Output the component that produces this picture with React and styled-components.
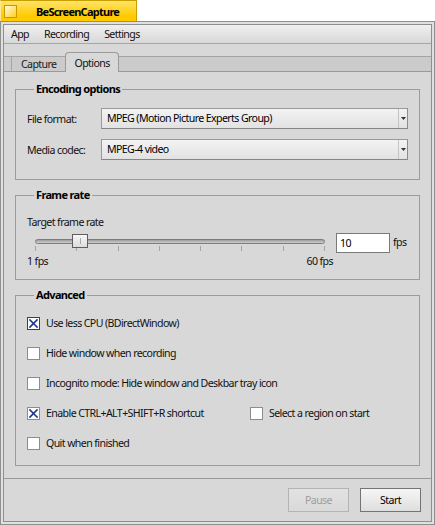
import React from "react";
import styled, { createGlobalStyle } from "styled-components";

const GlobalStyle = createGlobalStyle`
  html, body { margin: 0; padding: 0; background: #ffffff; }
  body {
    font-family: "Noto Sans", "DejaVu Sans", sans-serif;
    font-size: 10.6px;
    letter-spacing: -0.6px;
    color: #111;
  }
  * { box-sizing: border-box; }
`;

const Screen = styled.div`
  width: 435px;
  height: 525px;
  display: flex;
  flex-direction: column;
`;

const TitleTab = styled.div`
  width: 137px;
  height: 21px;
  display: flex;
  align-items: center;
  padding-left: 3px;
  border: 1px solid #caa000;
  border-bottom: none;
  border-left-color: #ffe89a;
  background: linear-gradient(#ffe36a, #ffcb00 75%);
`;

const CloseBox = styled.div`
  width: 13px;
  height: 13px;
  border: 1px solid #c39a00;
  background: linear-gradient(135deg, #fffbe2, #ffe070 60%, #ffd21a);
`;

const Title = styled.span`
  margin-left: 19px;
  font-weight: bold;
  font-size: 11px;
  letter-spacing: -0.75px;
  color: #000;
`;

const Window = styled.div`
  height: 504px;
  border: 1px solid #8e8e8e;
  background: #e0e0e0;
  padding: 2px;
  display: flex;
`;

const Inner = styled.div`
  flex: 1;
  border: 1px solid #8e8e8e;
  background: #d8d8d8;
  display: flex;
  flex-direction: column;
`;

const MenuBar = styled.div`
  height: 19px;
  display: flex;
  align-items: center;
  gap: 1px;
  border-bottom: 1px solid #a6a6a6;
  background: linear-gradient(#efefef, #d8d8d8);
`;

const MenuItem = styled.span`
  padding: 0 7px;
  line-height: 18px;
`;

const TopGap = styled.div`
  height: 8px;
`;

const TabStrip = styled.div`
  height: 20px;
  display: flex;
  align-items: flex-end;
`;

const StripPiece = styled.div`
  height: 16px;
  background: #cbcbcb;
  border-top: 1px solid #a4a4a4;
  border-bottom: 1px solid #999;
  ${(p) => (p.$grow ? "flex: 1;" : `width: ${p.$w}px;`)}
  ${(p) => (p.$divider ? "border-right: 1px solid #a4a4a4;" : "")}
`;

const InactiveTab = styled.div`
  height: 16px;
  padding: 0 9px;
  display: flex;
  align-items: center;
  background: #cbcbcb;
  border-top: 1px solid #a4a4a4;
  border-bottom: 1px solid #999;
  color: #1a1a1a;
`;

const ActiveTab = styled.div`
  height: 20px;
  padding: 0 8px;
  display: flex;
  align-items: center;
  background: #d8d8d8;
  border: 1px solid #999;
  border-bottom: none;
  border-radius: 4px 4px 0 0;
`;

const TabContent = styled.div`
  flex: 1;
  border-bottom: 1px solid #9a9a9a;
  padding: 10px 11px 0;
  display: flex;
  flex-direction: column;
  gap: 8px;
`;

const Group = styled.fieldset`
  margin: 0;
  min-width: 0;
  border: 1px solid #9c9c9c;
  padding: ${(p) => p.$pad};
`;

const Legend = styled.legend`
  margin-left: 7px;
  padding: 0 2px;
  font-weight: bold;
  font-size: 11px;
  letter-spacing: -0.65px;
  line-height: 14px;
  color: #000;
`;

const FieldGrid = styled.div`
  display: grid;
  grid-template-columns: 74px 1fr;
  grid-auto-rows: 21px;
  row-gap: 10px;
  align-items: center;
`;

const Dropdown = styled.div`
  height: 21px;
  display: flex;
  border: 1px solid #9a9a9a;
  border-bottom-color: #858585;
  border-right-color: #8c8c8c;
  background: linear-gradient(#f3f3f3, #e2e2e2);
`;

const DropValue = styled.div`
  flex: 1;
  padding-left: 5px;
  line-height: 19px;
  color: #000;
`;

const DropArrow = styled.div`
  width: 9px;
  border-left: 1px solid #c4c4c4;
  display: flex;
  align-items: center;
  justify-content: center;
`;

const Caption = styled.div`
  line-height: 14px;
`;

const RateRow = styled.div`
  display: flex;
  align-items: flex-start;
  margin-top: 4px;
`;

const SliderCol = styled.div`
  width: 306px;
  display: flex;
  flex-direction: column;
`;

const TrackWrap = styled.div`
  position: relative;
  height: 13px;
  padding: 0 8px;
`;

const Track = styled.div`
  margin-top: 6px;
  height: 5px;
  border: 1px solid #7c7c7c;
  border-radius: 3px;
  background: linear-gradient(#9c9c9c, #cfcfcf);
`;

const Thumb = styled.div`
  position: absolute;
  top: 1px;
  width: 16px;
  height: 14px;
  border: 1px solid #5e5e5e;
  background: linear-gradient(#f7f7f7, #dcdcdc);
  display: flex;
  justify-content: center;
  align-items: center;
  &::after {
    content: "";
    width: 1px;
    height: 6px;
    background: #a8a8a8;
  }
`;

const Ticks = styled.div`
  height: 5px;
  padding: 0 8px;
  display: flex;
  justify-content: space-between;
`;

const Tick = styled.span`
  width: 1px;
  background: #a4a4a4;
`;

const ScaleLabels = styled.div`
  margin-top: 3px;
  display: flex;
  justify-content: space-between;
  line-height: 14px;
`;

const FpsInput = styled.input`
  margin: 0 0 0 3px;
  width: 54px;
  height: 20px;
  padding: 0 0 0 3px;
  border: 1px solid #7a7a7a;
  background: #fff;
  font: inherit;
  letter-spacing: inherit;
  color: #000;
  outline: none;
`;

const FpsUnit = styled.span`
  margin-left: 3px;
  line-height: 18px;
`;

const CheckList = styled.div`
  display: grid;
  row-gap: 16px;
`;

const CheckRow = styled.div`
  height: 14px;
  display: flex;
  align-items: center;
`;

const CheckItem = styled.label`
  display: flex;
  align-items: center;
  gap: 6px;
  ${(p) => (p.$w ? `width: ${p.$w}px;` : "")}
`;

const Box = styled.span`
  width: 13px;
  height: 13px;
  flex: none;
  display: flex;
  border: 1px solid ${(p) => (p.$focus ? "#1437e6" : "#8c8c8c")};
  background: #fff;
`;

const ButtonBar = styled.div`
  height: 42px;
  display: flex;
  justify-content: flex-end;
  align-items: flex-start;
  gap: 11px;
  padding: 9px 10px 0;
`;

const Button = styled.div`
  width: 61px;
  height: 24px;
  display: flex;
  align-items: center;
  justify-content: center;
  border: 1px solid ${(p) => (p.$disabled ? "#b4b4b4" : "#747474")};
  background: ${(p) =>
    p.$disabled ? "linear-gradient(#e2e2e2, #d9d9d9)" : "linear-gradient(#f6f6f6, #dedede)"};
  color: ${(p) => (p.$disabled ? "#9d9d9d" : "#000")};
`;

const Cross = () => (
  <svg width="11" height="11" viewBox="0 0 11 11">
    <path d="M2 2L9 9M9 2L2 9" stroke="#1b3b8c" strokeWidth="1.7" strokeLinecap="square" />
  </svg>
);

const Arrow = () => (
  <svg width="5" height="3" viewBox="0 0 5 3">
    <path d="M0 0H5L2.5 3Z" fill="#333" />
  </svg>
);

const Check = ({ checked, focus, w, children }) => (
  <CheckItem $w={w}>
    <Box $focus={focus}>{checked && <Cross />}</Box>
    <span>{children}</span>
  </CheckItem>
);

const ticks = Array.from({ length: 8 }, (_, i) => i);

export default function App() {
  return (
    <>
      <GlobalStyle />
      <Screen>
        <TitleTab>
          <CloseBox />
          <Title>BeScreenCapture</Title>
        </TitleTab>
        <Window>
          <Inner>
            <MenuBar>
              <MenuItem>App</MenuItem>
              <MenuItem>Recording</MenuItem>
              <MenuItem>Settings</MenuItem>
            </MenuBar>
            <TopGap />
            <TabStrip>
              <StripPiece $w={8} $divider />
              <InactiveTab>Capture</InactiveTab>
              <ActiveTab>Options</ActiveTab>
              <StripPiece $grow />
            </TabStrip>
            <TabContent>
              <Group $pad="12px 11px 19px">
                <Legend>Encoding options</Legend>
                <FieldGrid>
                  <span>File format:</span>
                  <Dropdown>
                    <DropValue>MPEG (Motion Picture Experts Group)</DropValue>
                    <DropArrow>
                      <Arrow />
                    </DropArrow>
                  </Dropdown>
                  <span>Media codec:</span>
                  <Dropdown>
                    <DropValue>MPEG-4 video</DropValue>
                    <DropArrow>
                      <Arrow />
                    </DropArrow>
                  </Dropdown>
                </FieldGrid>
              </Group>

              <Group $pad="13px 11px 11px">
                <Legend>Frame rate</Legend>
                <Caption>Target frame rate</Caption>
                <RateRow>
                  <SliderCol>
                    <TrackWrap>
                      <Track />
                      <Thumb style={{ left: 45 }} />
                    </TrackWrap>
                    <Ticks>
                      {ticks.map((t) => (
                        <Tick key={t} />
                      ))}
                    </Ticks>
                    <ScaleLabels>
                      <span>1 fps</span>
                      <span>60 fps</span>
                    </ScaleLabels>
                  </SliderCol>
                  <FpsInput value="10" readOnly />
                  <FpsUnit>fps</FpsUnit>
                </RateRow>
              </Group>

              <Group $pad="14px 11px 15px">
                <Legend>Advanced</Legend>
                <CheckList>
                  <CheckRow>
                    <Check checked focus>Use less CPU (BDirectWindow)</Check>
                  </CheckRow>
                  <CheckRow>
                    <Check>Hide window when recording</Check>
                  </CheckRow>
                  <CheckRow>
                    <Check>Incognito mode: Hide window and Deskbar tray icon</Check>
                  </CheckRow>
                  <CheckRow>
                    <Check checked w={223}>Enable CTRL+ALT+SHIFT+R shortcut</Check>
                    <Check>Select a region on start</Check>
                  </CheckRow>
                  <CheckRow>
                    <Check>Quit when finished</Check>
                  </CheckRow>
                </CheckList>
              </Group>
            </TabContent>
            <ButtonBar>
              <Button $disabled>Pause</Button>
              <Button>Start</Button>
            </ButtonBar>
          </Inner>
        </Window>
      </Screen>
    </>
  );
}
